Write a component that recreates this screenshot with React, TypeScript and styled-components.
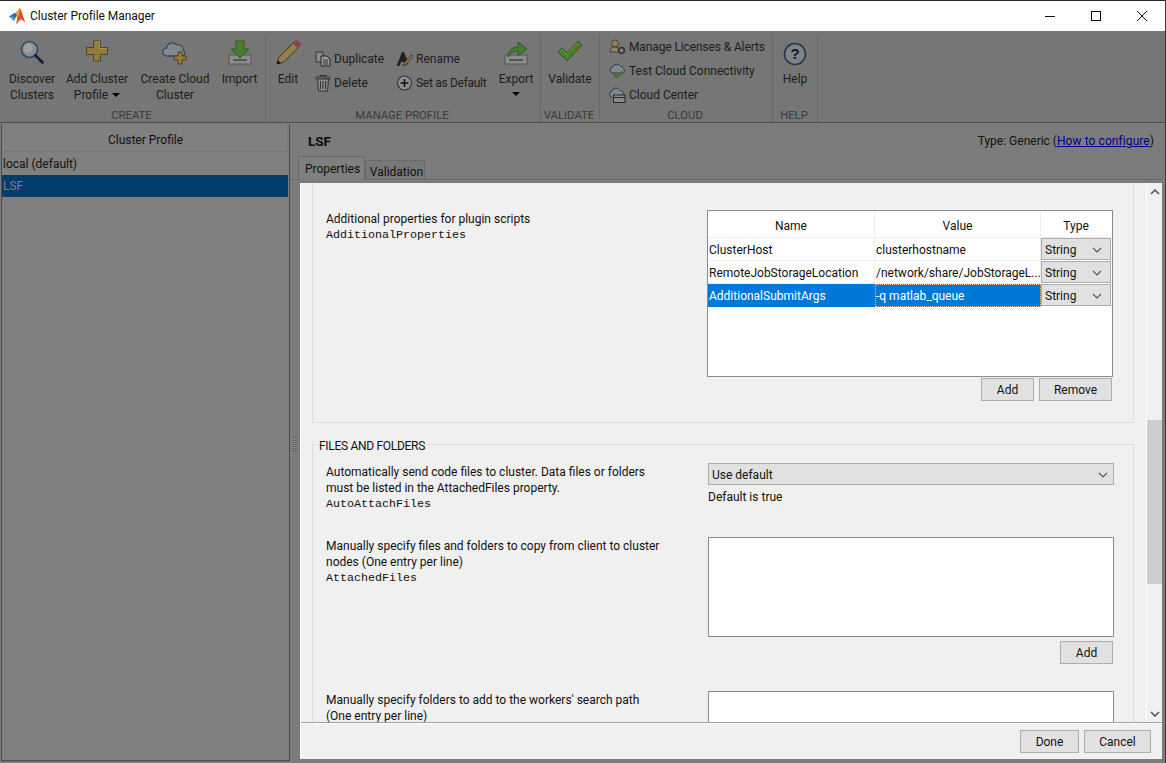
import React from "react";
import styled, { createGlobalStyle } from "styled-components";

const Global = createGlobalStyle`
  html, body { margin: 0; padding: 0; background: #777; }
  * { box-sizing: border-box; }
  body { font-family: Roboto, "Liberation Sans", sans-serif; font-size: 12px; color: #111; }
`;

const Win = styled.div`
  width: 1166px; height: 763px; overflow: hidden; display: flex; flex-direction: column;
  background: #7a7a7a; border-top: 1px solid #2a2a2a; border-right: 1px solid #3a3a3a;
`;
const TitleBar = styled.div`
  height: 30px; flex: none; background: #fff; display: flex; align-items: center; padding-left: 9px;
`;
const TitleText = styled.span`margin-left: 4px; font-size: 12px; color: #111; flex: 1; letter-spacing: -0.05px;`;
const WinButtons = styled.div`display: flex; align-items: center; padding-right: 15px; gap: 30px;`;

const Ribbon = styled.div`
  height: 92px; flex: none; background: #767676; display: flex; border-bottom: 1px solid #4f4f4f;
`;
const Group = styled.div<{ $w: number }>`
  width: ${(p) => p.$w}px; flex: none; display: flex; flex-direction: column; align-items: stretch;
  border-right: 1px solid #686868; margin-top: 3px;
`;
const GroupBody = styled.div`flex: 1; display: flex; min-height: 0;`;
const GroupLabel = styled.div`height: 15px; line-height: 17px; text-align: center; font-size: 11.3px; color: #3a3a3a; padding-right: 2px;`;
const Tool = styled.div<{ $w: number }>`
  width: ${(p) => p.$w}px; flex: none; display: flex; flex-direction: column; align-items: center;
  padding-top: 6px; text-align: center; line-height: 16px; color: #1c1c1c;
`;
const ToolIcon = styled.div`height: 27px; margin-bottom: 4px; display: flex; align-items: flex-start; justify-content: center;`;
const Caret = styled.span`
  display: inline-block; width: 0; height: 0; margin-left: 4px; vertical-align: 2px;
  border-left: 4px solid transparent; border-right: 4px solid transparent; border-top: 4px solid #000;
`;
const BlockCaret = styled(Caret)`display: block; margin: 5px 0 0;`;
const SmallCol = styled.div<{ $w: number; $gap: number; $top: number; $left?: number }>`
  width: ${(p) => p.$w}px; flex: none; display: flex; flex-direction: column;
  gap: ${(p) => p.$gap}px; padding-top: ${(p) => p.$top}px; padding-left: ${(p) => p.$left ?? 0}px;
`;
const SmallTool = styled.div<{ $sp?: number }>`
  height: 16px; display: flex; align-items: center; gap: 3px; white-space: nowrap; color: #1c1c1c;
  letter-spacing: ${(p) => p.$sp ?? 0}px;
  svg { flex: none; }
`;

const Body = styled.div`flex: 1; min-height: 0; display: flex;`;
const Left = styled.div`
  width: 289px; flex: none; background: #808080; border: 1px solid #4a4a4a; border-top: none;
  margin: 1px 0 2px 1px;
`;
const LeftHead = styled.div`
  height: 28px; line-height: 32px; text-align: center; border-bottom: 1px solid #767676; color: #111;
  margin-right: 1px; border-right: 1px solid #767676; padding-left: 2px;
`;
const ListRow = styled.div<{ $sel?: boolean }>`
  height: 22px; line-height: 22px; padding-left: 1px; white-space: nowrap; margin-right: 1px;
  background: ${(p) => (p.$sel ? "#003c6c" : "transparent")};
  color: ${(p) => (p.$sel ? "#7f7f7f" : "#111")};
`;
const ListFirst = styled(ListRow)`height: 23px; line-height: 25px;`;

const Right = styled.div`flex: 1; min-width: 0; display: flex; flex-direction: column; background: #7c7c7c; position: relative;`;
const Grip = styled.div`
  position: absolute; left: 3px; top: 313px; width: 4px; height: 15px;
  background: repeating-linear-gradient(to bottom, #5f5f5f 0 1px, #8d8d8d 1px 2px);
`;
const RightHead = styled.div`
  height: 34px; flex: none; display: flex; align-items: center; justify-content: space-between;
  padding: 2px 11px 0 18px;
`;
const ProfileName = styled.b`font-size: 13.5px; color: #0a0a0a;`;
const TypeText = styled.span`color: #111;`;
const Link = styled.a`color: #00008b; text-decoration: underline; letter-spacing: 0.08px;`;
const Tabs = styled.div`
  height: 23px; flex: none; display: flex; align-items: flex-end; padding-left: 8px;
  border-bottom: 1px solid #6a6a6a; margin-right: 3px;
`;
const Tab = styled.div<{ $on?: boolean }>`
  height: ${(p) => (p.$on ? 24 : 20)}px; width: ${(p) => (p.$on ? 67 : 60)}px; text-align: center;
  line-height: ${(p) => (p.$on ? 25 : 22)}px; margin-bottom: -1px; padding-left: ${(p) => (p.$on ? 2 : 3)}px;
  background: ${(p) => (p.$on ? "#7f7f7f" : "#787878")}; color: #111;
  border: 1px solid #6a6a6a; ${(p) => (p.$on ? "border-bottom: none;" : "")}
`;
const Panel = styled.div`
  flex: 1; min-height: 0; margin: 3px 3px 4px 10px; background: #f0f0f0; display: flex; flex-direction: column;
  border-left: 1px solid #fff;
`;
const PanelTop = styled.div`flex: 1; min-height: 0; display: flex;`;
const Scroll = styled.div`flex: 1; min-width: 0; overflow: hidden; padding: 0 12px 0 11px;`;
const Section1 = styled.div`
  height: 250px; margin-top: -10px; border: 1px solid #dcdcdc; padding-top: 10px;
`;
const Fieldset = styled.fieldset`
  margin: 13px 0 0; padding: 0; height: 340px; border: 1px solid #dcdcdc; border-bottom: none; min-width: 0;
`;
const Legend = styled.legend`
  margin-left: 5px; padding: 4px 1px 0; font-size: 12px; line-height: 13px; color: #111; letter-spacing: -0.3px;
`;
const PropRow = styled.div<{ $h: number; $top?: number; $col?: number; $end?: number }>`
  height: ${(p) => p.$h}px; display: grid; grid-template-columns: ${(p) => p.$col ?? 382}px 1fr;
  padding: ${(p) => p.$top ?? 0}px ${(p) => p.$end ?? 19}px 0 13px;
`;
const PropText = styled.div`padding-top: 1px;`;
const Desc = styled.div`line-height: 16px; color: #111; font-size: 12px;`;
const Mono = styled.div`font-family: "Liberation Mono", monospace; font-size: 11.67px; line-height: 16px;`;
const Hint = styled.div`line-height: 16px; margin-top: 4px;`;

const TableBox = styled.div`
  height: 167px; background: #fff; border: 1px solid #8c8c8c;
`;
const THead = styled.div`display: grid; grid-template-columns: 167px 166px 71px; height: 27px; border-bottom: 1px solid #f0f0f0;`;
const Th = styled.div`
  text-align: center; line-height: 31px; border-right: 1px solid #eee; color: #111;
  &:last-child { border-right: none; margin-right: 1px; }
`;
const Tr = styled.div`display: grid; grid-template-columns: 167px 166px 71px; height: 23px;`;
const Td = styled.div<{ $sel?: boolean; $focus?: boolean }>`
  line-height: 25px; padding-left: 1px; overflow: hidden; white-space: nowrap; color: ${(p) => (p.$sel ? "#fff" : "#111")};
  background: ${(p) => (p.$sel ? "#0078d7" : "#fff")};
  border-bottom: 1px solid ${(p) => (p.$sel ? "#0078d7" : "#f0f0f0")};
  border-right: 1px solid ${(p) => (p.$sel ? "#0078d7" : "#f0f0f0")};
  ${(p) => (p.$focus ? "outline: 1px dotted #f3c48f; outline-offset: -1px;" : "")}
`;
const Combo = styled.div`
  height: 22px; margin-right: 1px; background: #e1e1e1; border: 1px solid #adadad; display: flex; align-items: center;
  justify-content: space-between; padding: 1px 8px 0 3px; color: #111;
`;
const BtnRow = styled.div<{ $top?: number }>`display: flex; justify-content: flex-end; gap: 5px; margin-top: ${(p) => p.$top ?? 1}px; padding-right: 1px;`;
const Btn = styled.div<{ $w: number }>`
  width: ${(p) => p.$w}px; height: 23px; background: #e1e1e1; border: 1px solid #adadad; text-align: center;
  line-height: 22px; color: #111;
`;
const Select = styled(Combo)`height: 22px; margin: 0; padding: 1px 5px 0 3px;`;
const TextBox = styled.div<{ $h: number }>`height: ${(p) => p.$h}px; background: #fff; border: 1px solid #8c8c8c;`;
const ScrollBar = styled.div`
  width: 16px; flex: none; background: #f0f0f0; border-left: 1px solid #fff; display: flex; flex-direction: column;
  align-items: stretch; color: #555;
`;
const ScrollArrow = styled.div`height: 17px; flex: none; display: flex; align-items: center; justify-content: center;`;
const Track = styled.div`flex: 1; padding-top: 220px;`;
const Thumb = styled.div`height: 164px; background: #cdcdcd;`;
const Footer = styled.div`
  height: 37px; flex: none; border-top: 1px solid #a0a0a0; box-shadow: inset 0 1px #fff; display: flex; justify-content: flex-end; gap: 5px;
  padding: 7px 11px 0 0;
`;

const Chev = () => (
  <svg width="10" height="6" viewBox="0 0 10 6"><path d="M1 1l4 4 4-4" fill="none" stroke="#555" strokeWidth="1.1" /></svg>
);

const Matlab = () => (
  <svg width="17" height="17" viewBox="0 0 17 17">
    <path d="M0 8.5L6 4.5 8 7 5 13z" fill="#2f6fa8" />
    <path d="M0 8.5L5 9 5 13z" fill="#5fa3d6" />
    <path d="M7 4.5L11 0C13 3 15 12 16.5 15 14.5 13 13 11.5 12 11.5 10.5 11.5 9 15 7 16.5 8 13 8.5 8 7 4.5z" fill="#d9532a" />
    <path d="M7 4.5L11 0C10.5 4 10 7 8.7 10 8.5 8 8 6 7 4.5z" fill="#f4a52a" />
  </svg>
);

const Search = () => (
  <svg width="24" height="24" viewBox="0 0 24 24">
    <circle cx="9.5" cy="9.5" r="8" fill="#8a8f93" stroke="#2e4a5e" strokeWidth="1.6" />
    <circle cx="8" cy="8" r="4.5" fill="#a0a0a0" />
    <path d="M15.5 15.5L22.5 22.5" stroke="#10223a" strokeWidth="2.6" strokeLinecap="round" />
  </svg>
);
const Plus = ({ s = 22 }: { s?: number }) => (
  <svg width={s} height={s} viewBox="0 0 22 22">
    <path d="M7.5 1h7v6.5H21.5v7H14.5V21h-7V14.5H.5v-7h7z" fill="#8f7b3a" stroke="#54431a" />
    <path d="M8.5 2h5v6.5h7" fill="none" stroke="#a8964f" />
  </svg>
);
const CloudPlus = () => (
  <svg width="26" height="25" viewBox="0 0 26 25">
    <path d="M5 16a4 4 0 0 1-.5-8A6 6 0 0 1 15 5a4.5 4.5 0 0 1 6 5 3.2 3.2 0 0 1-1 6z" fill="#7e8890" stroke="#394a58" strokeWidth="1.3" />
    <path d="M16 12h4v4h4v4h-4v4h-4v-4h-4v-4h4z" fill="#8f7b3a" stroke="#54431a" />
  </svg>
);
const ImportIcon = () => (
  <svg width="24" height="25" viewBox="0 0 24 25">
    <rect x="1" y="15" width="22" height="9" fill="#8d8d8d" stroke="#555" />
    <rect x="5" y="19" width="14" height="2" fill="#555" />
    <path d="M8 0h8v9h5L12 18 3 9h5z" fill="#4a7b33" stroke="#2e5a1e" />
  </svg>
);
const Pencil = () => (
  <svg width="25" height="25" viewBox="0 0 26 26">
    <path d="M1 25l2-7L18 3l5 5L8 23z" fill="#957e50" stroke="#3d3220" />
    <path d="M1 25l1-4 3 3z" fill="#111" />
    <path d="M18 3l2-2c1-1 2-1 3 0l2 2c1 1 1 2 0 3l-2 2z" fill="#8e3f50" />
  </svg>
);
const Duplicate = () => (
  <svg width="16" height="16" viewBox="0 0 16 16">
    <path d="M1 1h7v10H1z" fill="#8a8a8a" stroke="#333" />
    <path d="M6 5h6l3 3v7H6z" fill="#9a9a9a" stroke="#222" />
    <path d="M8 9h5M8 11h5M8 13h5" stroke="#333" />
  </svg>
);
const Trash = () => (
  <svg width="16" height="18" viewBox="0 0 16 18">
    <path d="M1 3h14v2H1z" fill="#8e8e8e" stroke="#333" />
    <path d="M2.5 5h11l-1 12h-9z" fill="#8a8a8a" stroke="#333" />
    <path d="M5.5 7v8M8 7v8M10.5 7v8" stroke="#333" />
    <path d="M5 3V1.5h6V3" fill="none" stroke="#333" />
  </svg>
);
const RenameIcon = () => (
  <svg width="17" height="16" viewBox="0 0 17 16">
    <path d="M0.5 15L6 1h2l4 10-1.5 4L9.5 11H5L3.5 15z" fill="#222" />
    <path d="M7 15l1-3 7-8 2 1.5-7 8z" fill="#93723a" stroke="#222" strokeWidth=".6" />
  </svg>
);
const AddDefault = () => (
  <svg width="17" height="16" viewBox="0 0 17 16">
    <circle cx="8.5" cy="8" r="7" fill="#8f8f8f" stroke="#27384a" strokeWidth="1.2" />
    <path d="M8.5 4v8M4.5 8h8" stroke="#111" strokeWidth="1.6" />
  </svg>
);
const ExportIcon = () => (
  <svg width="24" height="25" viewBox="0 0 24 25">
    <rect x="1" y="15" width="22" height="9" fill="#8d8d8d" stroke="#555" />
    <rect x="5" y="19" width="14" height="2" fill="#555" />
    <path d="M4 17c0-6 4-10 10-10V2l9 7-9 7v-5c-4 0-7 2-10 6z" fill="#4a7b33" stroke="#2e5a1e" />
  </svg>
);
const Check = () => (
  <svg width="26" height="22" viewBox="0 0 26 22">
    <path d="M1 12l4-4 5 5L21 1l4 4L10 21z" fill="#4a7f2b" stroke="#2f5a1a" />
    <path d="M2.5 12L5 9.5l5 5L21 2.5" fill="none" stroke="#659a44" />
  </svg>
);
const LicenseIcon = () => (
  <svg width="17" height="16" viewBox="0 0 17 16">
    <circle cx="6" cy="4.5" r="3.5" fill="#8e8266" stroke="#4a3f22" />
    <path d="M1 13c0-4 2-5 5-5s4 1 4 3v2z" fill="#8e8266" stroke="#4a3f22" />
    <circle cx="12.5" cy="11.5" r="3.2" fill="#555" stroke="#222" />
    <circle cx="12.5" cy="11.5" r="1.2" fill="#999" />
  </svg>
);
const CloudCheck = () => (
  <svg width="17" height="16" viewBox="0 0 17 16">
    <path d="M3.5 10a2.8 2.8 0 0 1-.3-5.5A4.5 4.5 0 0 1 11.5 3.5a3 3 0 0 1 3.5 3.5A2 2 0 0 1 14.5 10z" fill="#7e8890" stroke="#2f3f4c" />
    <path d="M6 11l2 2 5-5 1.5 1.5L8 15.5 4.5 12.5z" fill="#4a7f2b" stroke="#2f5a1a" strokeWidth=".5" />
  </svg>
);
const CloudWin = () => (
  <svg width="17" height="16" viewBox="0 0 17 16">
    <path d="M3 10a2.8 2.8 0 0 1-.3-5.5A4.5 4.5 0 0 1 11 3.5a3 3 0 0 1 3.5 3.5" fill="#7e8890" stroke="#2f3f4c" />
    <rect x="4.5" y="8" width="11.5" height="7.5" fill="#8a8a8a" stroke="#2a2a2a" />
    <path d="M4.5 10.5h11.5" stroke="#2a2a2a" />
  </svg>
);
const HelpIcon = () => (
  <svg width="24" height="26" viewBox="0 0 24 26">
    <circle cx="12" cy="14" r="10.5" fill="#7d858c" stroke="#26384a" strokeWidth="1.6" />
    <text x="12" y="19" textAnchor="middle" fontFamily="Liberation Sans" fontWeight="700" fontSize="15" fill="#111">?</text>
  </svg>
);

const App = () => (
  <>
    <Global />
    <Win>
      <TitleBar>
        <Matlab />
        <TitleText>Cluster Profile Manager</TitleText>
        <WinButtons>
          <svg width="16" height="16" viewBox="0 0 16 16"><path d="M3 8.5h10" stroke="#111" /></svg>
          <svg width="16" height="16" viewBox="0 0 16 16"><rect x="3.5" y="3.5" width="9" height="9" fill="none" stroke="#111" /></svg>
          <svg width="16" height="16" viewBox="0 0 16 16"><path d="M3 3l10 10M13 3L3 13" stroke="#111" /></svg>
        </WinButtons>
      </TitleBar>
      <Ribbon>
        <Group $w={266}>
          <GroupBody>
            <Tool $w={64}><ToolIcon><Search /></ToolIcon>Discover<br />Clusters</Tool>
            <Tool $w={66}><ToolIcon><Plus /></ToolIcon>Add Cluster<br /><span>Profile<Caret /></span></Tool>
            <Tool $w={90}><ToolIcon><CloudPlus /></ToolIcon>Create Cloud<br />Cluster</Tool>
            <Tool $w={39}><ToolIcon><ImportIcon /></ToolIcon>Import</Tool>
          </GroupBody>
          <GroupLabel>CREATE</GroupLabel>
        </Group>
        <Group $w={275}>
          <GroupBody>
            <Tool $w={44}><ToolIcon><Pencil /></ToolIcon>Edit</Tool>
            <SmallCol $w={86} $gap={8} $top={17} $left={5}>
              <SmallTool><Duplicate />Duplicate</SmallTool>
              <SmallTool><Trash />Delete</SmallTool>
            </SmallCol>
            <SmallCol $w={98} $gap={8} $top={17}>
              <SmallTool><RenameIcon />Rename</SmallTool>
              <SmallTool $sp={-0.3}><AddDefault />Set as Default</SmallTool>
            </SmallCol>
            <Tool $w={44}><ToolIcon><ExportIcon /></ToolIcon>Export<BlockCaret /></Tool>
          </GroupBody>
          <GroupLabel>MANAGE PROFILE</GroupLabel>
        </Group>
        <Group $w={59}>
          <GroupBody>
            <Tool $w={58}><ToolIcon><Check /></ToolIcon>Validate</Tool>
          </GroupBody>
          <GroupLabel>VALIDATE</GroupLabel>
        </Group>
        <Group $w={173}>
          <GroupBody>
            <SmallCol $w={172} $gap={8} $top={5} $left={9}>
              <SmallTool $sp={-0.12}><LicenseIcon />Manage Licenses &amp; Alerts</SmallTool>
              <SmallTool><CloudCheck />Test Cloud Connectivity</SmallTool>
              <SmallTool><CloudWin />Cloud Center</SmallTool>
            </SmallCol>
          </GroupBody>
          <GroupLabel>CLOUD</GroupLabel>
        </Group>
        <Group $w={45}>
          <GroupBody>
            <Tool $w={44}><ToolIcon><HelpIcon /></ToolIcon>Help</Tool>
          </GroupBody>
          <GroupLabel>HELP</GroupLabel>
        </Group>
      </Ribbon>
      <Body>
        <Left>
          <LeftHead>Cluster Profile</LeftHead>
          <ListFirst>local (default)</ListFirst>
          <ListRow $sel>LSF</ListRow>
        </Left>
        <Right>
          <Grip />
          <RightHead>
            <ProfileName>LSF</ProfileName>
            <TypeText>Type: Generic (<Link>How to configure</Link>)</TypeText>
          </RightHead>
          <Tabs>
            <Tab $on>Properties</Tab>
            <Tab>Validation</Tab>
          </Tabs>
          <Panel>
            <PanelTop>
              <Scroll>
                <Section1>
                  <PropRow $h={190} $top={26} $col={381} $end={20}>
                    <PropText>
                      <Desc>Additional properties for plugin scripts</Desc>
                      <Mono>AdditionalProperties</Mono>
                    </PropText>
                    <div>
                      <TableBox>
                        <THead>
                          <Th>Name</Th><Th>Value</Th><Th>Type</Th>
                        </THead>
                        <Tr><Td>ClusterHost</Td><Td>clusterhostname</Td><Combo>String<Chev /></Combo></Tr>
                        <Tr><Td>RemoteJobStorageLocation</Td><Td>/network/share/JobStorageL...</Td><Combo>String<Chev /></Combo></Tr>
                        <Tr><Td $sel>AdditionalSubmitArgs</Td><Td $sel $focus>-q matlab_queue</Td><Combo>String<Chev /></Combo></Tr>
                      </TableBox>
                      <BtnRow>
                        <Btn $w={53}>Add</Btn>
                        <Btn $w={73}>Remove</Btn>
                      </BtnRow>
                    </div>
                  </PropRow>
                </Section1>
                <Fieldset>
                  <Legend>FILES AND FOLDERS</Legend>
                  <PropRow $h={84} $top={10}>
                    <PropText>
                      <Desc>Automatically send code files to cluster. Data files or folders<br />must be listed in the AttachedFiles property.</Desc>
                      <Mono>AutoAttachFiles</Mono>
                    </PropText>
                    <div>
                      <Select>Use default<Chev /></Select>
                      <Hint>Default is true</Hint>
                    </div>
                  </PropRow>
                  <PropRow $h={154}>
                    <PropText>
                      <Desc>Manually specify files and folders to copy from client to cluster<br />nodes (One entry per line)</Desc>
                      <Mono>AttachedFiles</Mono>
                    </PropText>
                    <div>
                      <TextBox $h={100} />
                      <BtnRow $top={4}><Btn $w={53}>Add</Btn></BtnRow>
                    </div>
                  </PropRow>
                  <PropRow $h={100}>
                    <PropText>
                      <Desc>Manually specify folders to add to the workers' search path<br />(One entry per line)</Desc>
                    </PropText>
                    <div><TextBox $h={100} /></div>
                  </PropRow>
                </Fieldset>
              </Scroll>
              <ScrollBar>
                <ScrollArrow><svg width="10" height="6" viewBox="0 0 10 6"><path d="M1 5l4-4 4 4" fill="none" stroke="#555" strokeWidth="1.6" /></svg></ScrollArrow>
                <Track><Thumb /></Track>
                <ScrollArrow><svg width="10" height="6" viewBox="0 0 10 6"><path d="M1 1l4 4 4-4" fill="none" stroke="#555" strokeWidth="1.6" /></svg></ScrollArrow>
              </ScrollBar>
            </PanelTop>
            <Footer>
              <Btn $w={59}>Done</Btn>
              <Btn $w={67}>Cancel</Btn>
            </Footer>
          </Panel>
        </Right>
      </Body>
    </Win>
  </>
);

export default App;
